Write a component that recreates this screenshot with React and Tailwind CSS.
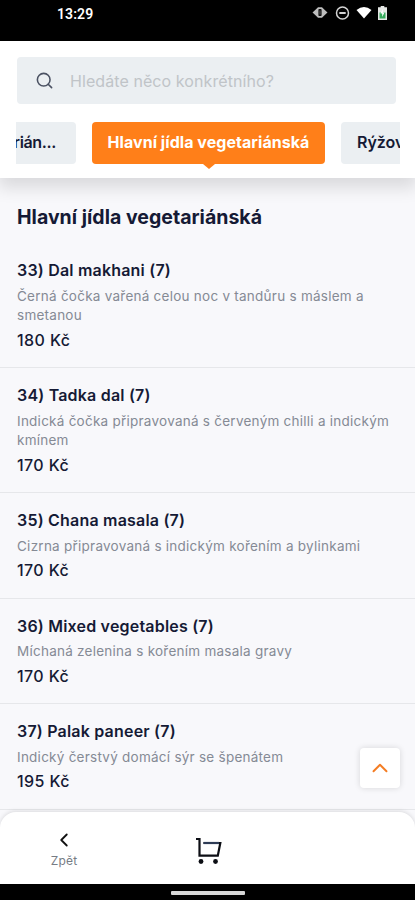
import { Search, ChevronUp, ChevronLeft } from "lucide-react"

const dishes = [
  { id: 33, name: "33) Dal makhani (7)", description: "Černá čočka vařená celou noc v tandůru s máslem a smetanou", price: "180 Kč" },
  { id: 34, name: "34) Tadka dal (7)", description: "Indická čočka připravovaná s červeným chilli a indickým kmínem", price: "170 Kč" },
  { id: 35, name: "35) Chana masala (7)", description: "Cizrna připravovaná s indickým kořením a bylinkami", price: "170 Kč" },
  { id: 36, name: "36) Mixed vegetables (7)", description: "Míchaná zelenina s kořením masala gravy", price: "170 Kč" },
  { id: 37, name: "37) Palak paneer (7)", description: "Indický čerstvý domácí sýr se špenátem", price: "195 Kč" },
]

function StatusBar() {
  return (
    <div className="h-[41px] shrink-0 bg-black flex items-start justify-between pl-[57px] pr-[28px]">
      <span className="mt-[4px] text-[14px] leading-[20px] tracking-[0.1px] font-semibold text-white font-['Roboto',sans-serif]">13:29</span>
      <div className="mt-[5px] flex items-center">
        <svg width="16" height="16" viewBox="0 0 16 16">
          <path d="M0.5 7.5 4 4.3 6 2.2h4l2 2.1 3.5 3.2L12 10.7l-2 2.1H6l-2-2.1z" fill="#bdbdbd" />
          <rect x="6.4" y="4" width="3.2" height="7" rx="0.8" fill="#111111" />
          <path d="M8 5.5v4" stroke="#555555" />
        </svg>
        <svg className="ml-[7px]" width="15" height="15" viewBox="0 0 15 15" fill="none" stroke="#d4d4d4">
          <circle cx="7.5" cy="7" r="6" strokeWidth="1.5" />
          <path d="M4.3 7h6.4" strokeWidth="2" />
        </svg>
        <svg className="ml-[6px]" width="16" height="15" viewBox="0 0 16 15">
          <path d="M0.5 4Q8-2 15.5 4L8 12.6z" fill="#ffffff" />
        </svg>
        <svg className="ml-[6px]" width="9" height="15" viewBox="0 0 9 15">
          <path d="M2.7 0h3.6v1.3H9V14H0V1.3h2.7z" fill="#e5e7e5" />
          <rect x="1.5" y="6.5" width="6" height="6" fill="#35a95b" />
          <path d="M4.8 3 2.5 7.6h1.7V11l2.3-4.6H4.8z" fill="#ffffff" />
        </svg>
      </div>
    </div>
  )
}

function Header() {
  return (
    <header className="relative z-10 h-[137px] shrink-0 bg-white px-4 pt-4 shadow-[0_8px_16px_2px_rgba(0,0,0,0.12)]">
      <div className="ml-px mr-[3px] h-[47px] flex items-center rounded-[4px] bg-[#ebeff2] pl-[18px]">
        <Search size={19} strokeWidth={2} className="text-[#4b5263]" />
        <span className="ml-[16px] text-[16px] leading-5 tracking-[0.08px] text-[#c0c4c8]">Hledáte něco konkrétního?</span>
      </div>
      <div className="mt-[18px] -mb-2 pb-2 w-[384px] flex overflow-hidden text-[16px] font-bold leading-[41px] text-[#151a35]">
        <div className="h-[42px] w-[60px] shrink-0 flex justify-end overflow-hidden rounded-r-[4px] bg-[#ebeff2] pr-[20px] font-semibold tracking-[-0.35px]">rián...</div>
        <div className="relative ml-4 h-[42px] w-[233px] shrink-0 rounded-[4px] bg-[#ff7f19] text-center tracking-[0.05px] whitespace-nowrap text-white">
          Hlavní jídla vegetariánská
          <div className="absolute left-1/2 top-full -ml-[6px] size-0 border-x-[6px] border-t-[5px] border-x-transparent border-t-[#ff7f19]" />
        </div>
        <div className="ml-4 h-[42px] w-[130px] shrink-0 rounded-[4px] bg-[#ebeff2] pl-4 font-semibold whitespace-nowrap">Rýžové pokrmy</div>
      </div>
    </header>
  )
}

function Dish({ dish }) {
  return (
    <li className="border-b border-[#e6e7ea] px-[17px] pt-4 pb-[16.5px]">
      <h3 className="text-[16px] font-semibold leading-[22px] tracking-[0.2px] text-[#151a35]">{dish.name}</h3>
      <p className="mt-[5.3px] text-[13.5px] leading-[19.5px] tracking-[0.25px] text-[#858a95]">{dish.description}</p>
      <p className="mt-[3.2px] text-[16px] font-medium leading-[22px] tracking-[0.4px] text-[#151a35]">{dish.price}</p>
    </li>
  )
}

function BottomBar() {
  return (
    <nav className="absolute inset-x-0 bottom-0">
      <div className="h-[72px] rounded-t-[16px] bg-white shadow-[0_-1px_4px_rgba(0,0,0,0.12)] flex">
        <button className="ml-[40px] mt-[17px] w-12 flex flex-col items-center">
          <ChevronLeft size={22} strokeWidth={2} className="text-[#111111]" />
          <span className="text-[12px] leading-[20px] tracking-[0.2px] text-[#777c85]">Zpět</span>
        </button>
        <button className="ml-[107px] mt-[25px] size-[27px]">
          <svg width="27" height="27" viewBox="0 0 27 27" fill="none" stroke="#0c0e14" strokeWidth="2.2">
            <path d="M1 2h3.5V18.6h18.3L25.3 6H8.5" />
            <path d="M8.5 6H24" stroke="#2d3b55" />
            <circle cx="6" cy="24.5" r="2.4" fill="#0c0e14" stroke="none" />
            <circle cx="20.5" cy="24.5" r="2.4" fill="#0c0e14" stroke="none" />
          </svg>
        </button>
      </div>
      <div className="h-4 bg-black pt-[7px]">
        <div className="mx-auto h-[4px] w-[74px] rounded-[1px] bg-[#d8d8d8]" />
      </div>
    </nav>
  )
}

export default function App() {
  return (
    <div className="relative h-[900px] w-full overflow-hidden flex flex-col bg-[#f8f8fb] font-['Inter',sans-serif]">
      <StatusBar />
      <Header />
      <main>
        <h2 className="px-[17px] pt-[26px] pb-[13.4px] text-[19.5px] font-bold leading-[26px] tracking-[0.02px] text-[#151a35]">Hlavní jídla vegetariánská</h2>
        <ul>
          {dishes.map(dish => (
            <Dish key={dish.id} dish={dish} />
          ))}
        </ul>
      </main>
      <BottomBar />
      <button className="absolute right-[15px] top-[748px] size-10 flex items-center justify-center rounded-[4px] bg-white shadow-[0_0_6px_rgba(0,0,0,0.14)]">
        <ChevronUp size={26} strokeWidth={1.8} className="text-[#f47d24]" />
      </button>
    </div>
  )
}
